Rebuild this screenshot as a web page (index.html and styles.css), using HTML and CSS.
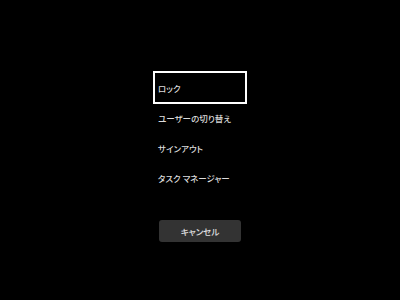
FILE: index.html
```html
<!DOCTYPE html>
<html lang="ja">
<head>
<meta charset="utf-8">
<link rel="stylesheet" href="styles.css">
</head>
<body>
<div class="screen">
  <div class="panel">
    <ul class="menu">
      <li class="item selected">ロック</li>
      <li class="item">ユーザーの切り替え</li>
      <li class="item">サインアウト</li>
      <li class="item">タスク マネージャー</li>
    </ul>
    <button class="cancel">キャンセル</button>
  </div>
</div>
</body>
</html>
```
FILE: styles.css
```css
html, body {
  margin: 0;
  padding: 0;
  background: #000;
  width: 400px;
  height: 300px;
  overflow: hidden;
}
.screen {
  display: flex;
  justify-content: center;
  padding-top: 71px;
  font-family: "Noto Sans CJK JP", "Noto Sans", sans-serif;
  font-size: 8.5px;
  font-weight: 500;
  font-feature-settings: "palt";
  color: #dcdcdc;
}
.panel {
  width: 94px;
  display: flex;
  flex-direction: column;
  align-items: center;
}
.menu {
  list-style: none;
  margin: 0;
  padding: 0;
  width: 100%;
}
.item {
  box-sizing: border-box;
  height: 30px;
  display: flex;
  align-items: center;
  padding-left: 5px;
}
.item.selected {
  height: 33px;
  border: 2px solid #fff;
  padding-left: 3px;
  margin-bottom: -1px;
}
.cancel {
  margin-top: 27px;
  width: 82px;
  height: 22px;
  border: none;
  border-radius: 3px;
  background: #333;
  color: #e0e0e0;
  font-family: inherit;
  font-size: 8.5px;
  font-weight: 500;
  font-feature-settings: "palt";
  padding: 0;
}
```
